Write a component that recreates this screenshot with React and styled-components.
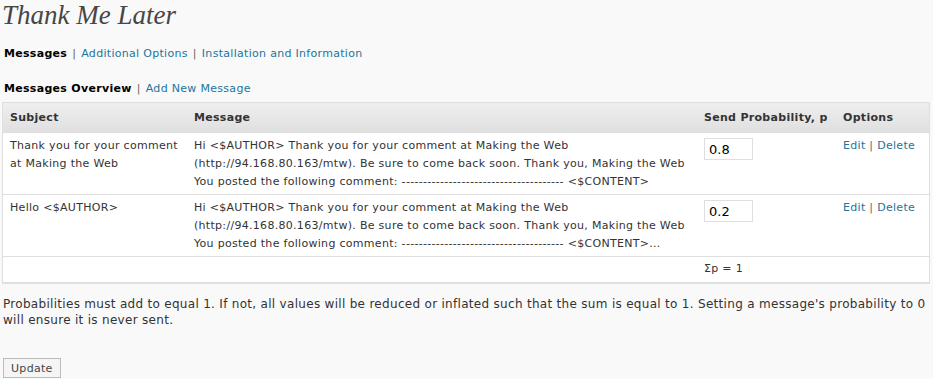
import React from 'react';
import styled, { createGlobalStyle } from 'styled-components';

const GlobalStyle = createGlobalStyle`
  html, body {
    margin: 0;
    padding: 0;
    background: #f9f9f9;
  }
  body {
    font-family: "DejaVu Sans", Verdana, sans-serif;
    font-size: 11px;
    letter-spacing: 0.3px;
    color: #333;
  }
`;

const messages = [
  {
    subject: 'Thank you for your comment at Making the Web',
    lines: [
      'Hi <$AUTHOR> Thank you for your comment at Making the Web',
      '(http://94.168.80.163/mtw). Be sure to come back soon. Thank you, Making the Web',
      'You posted the following comment: -------------------------------------- <$CONTENT>',
    ],
    p: '0.8',
  },
  {
    subject: 'Hello <$AUTHOR>',
    lines: [
      'Hi <$AUTHOR> Thank you for your comment at Making the Web',
      '(http://94.168.80.163/mtw). Be sure to come back soon. Thank you, Making the Web',
      'You posted the following comment: -------------------------------------- <$CONTENT>...',
    ],
    p: '0.2',
  },
];

const App = () => {
  return (
    <Wrapper>
      <GlobalStyle />
      <Title>Thank Me Later</Title>

      <SubNav $top={16}>
        <Current>Messages</Current>
        <Sep>|</Sep>
        <NavLink href="#">Additional Options</NavLink>
        <Sep>|</Sep>
        <NavLink href="#">Installation and Information</NavLink>
      </SubNav>

      <SubNav $top={20}>
        <Current>Messages Overview</Current>
        <Sep>|</Sep>
        <NavLink href="#">Add New Message</NavLink>
      </SubNav>

      <Table>
        <colgroup>
          <col style={{ width: 184 }} />
          <col style={{ width: 510 }} />
          <col style={{ width: 139 }} />
          <col />
        </colgroup>
        <thead>
          <tr>
            <th>Subject</th>
            <th>Message</th>
            <th>Send Probability, p</th>
            <th>Options</th>
          </tr>
        </thead>
        <tbody>
          {messages.map((m, i) => (
            <tr key={i}>
              <td>{m.subject}</td>
              <td>
                {m.lines.map((l, j) => (
                  <div key={j}>{l}</div>
                ))}
              </td>
              <td>
                <ProbInput type="text" defaultValue={m.p} />
              </td>
              <td>
                <NavLink href="#">Edit</NavLink> <Sep $small>|</Sep>{' '}
                <NavLink href="#">Delete</NavLink>
              </td>
            </tr>
          ))}
          <tr className="total">
            <td></td>
            <td></td>
            <td>Σp = 1</td>
            <td></td>
          </tr>
        </tbody>
      </Table>

      <Note>
        Probabilities must add to equal 1. If not, all values will be reduced or inflated such
        that the sum is equal to 1. Setting a message's probability to 0 will ensure it is
        never sent.
      </Note>

      <Button type="button">Update</Button>
    </Wrapper>
  );
};

const Wrapper = styled.div`
  padding: 0 3px 0 2px;
`;

const Title = styled.h2`
  margin: 0;
  font-family: "Liberation Serif", Georgia, serif;
  font-style: italic;
  font-weight: normal;
  font-size: 27px;
  line-height: 30px;
  letter-spacing: 0;
  color: #464646;
`;

const SubNav = styled.div`
  margin-top: ${p => p.$top}px;
  padding-left: 2px;
  line-height: 15px;
  font-size: 11px;
`;

const Current = styled.span`
  font-weight: bold;
  color: #000;
`;

const Sep = styled.span`
  color: #666;
  margin: ${p => (p.$small ? '0' : '0 5px')};
`;

const NavLink = styled.a`
  color: #21759b;
  text-decoration: none;
`;

const Table = styled.table`
  margin-top: 6px;
  width: 100%;
  table-layout: fixed;
  border-collapse: separate;
  border-spacing: 0;
  background: #fff;
  border: 1px solid #dfdfdf;
  border-bottom-width: 2px;

  th {
    text-align: left;
    font-weight: bold;
    font-size: 11px;
    color: #333;
    padding: 6px 7px 5px;
    line-height: 18px;
    background: linear-gradient(to bottom, #eeeeee, #e0e0e0);
    border-bottom: 1px solid #dfdfdf;
  }

  td {
    vertical-align: top;
    padding: 4px 7px 3px;
    line-height: 18px;
    color: #333;
    border-bottom: 1px solid #dfdfdf;
    white-space: nowrap;
  }

  td:first-child {
    white-space: normal;
  }

  tr.total td {
    border-bottom: none;
    padding: 3px 7px 4px;
  }
`;

const ProbInput = styled.input`
  box-sizing: border-box;
  width: 49px;
  height: 22px;
  margin: 1px 0 0 0;
  padding: 1px 4px 0;
  border: 1px solid #dfdfdf;
  font-family: "DejaVu Sans", Verdana, sans-serif;
  font-size: 13px;
  color: #000;
  background: #fff;
`;

const Note = styled.p`
  margin: 12px 0 0 1px;
  font-size: 12px;
  letter-spacing: 0.3px;
  line-height: 16px;
  color: #333;
`;

const Button = styled.button`
  margin-top: 30px;
  margin-left: 1px;
  height: 20px;
  padding: 0 7px;
  border: 1px solid #bbb;
  background: #f5f5f5;
  font-family: "DejaVu Sans", Verdana, sans-serif;
  font-size: 11px;
  letter-spacing: 0.3px;
  color: #464646;
`;

export default App;
